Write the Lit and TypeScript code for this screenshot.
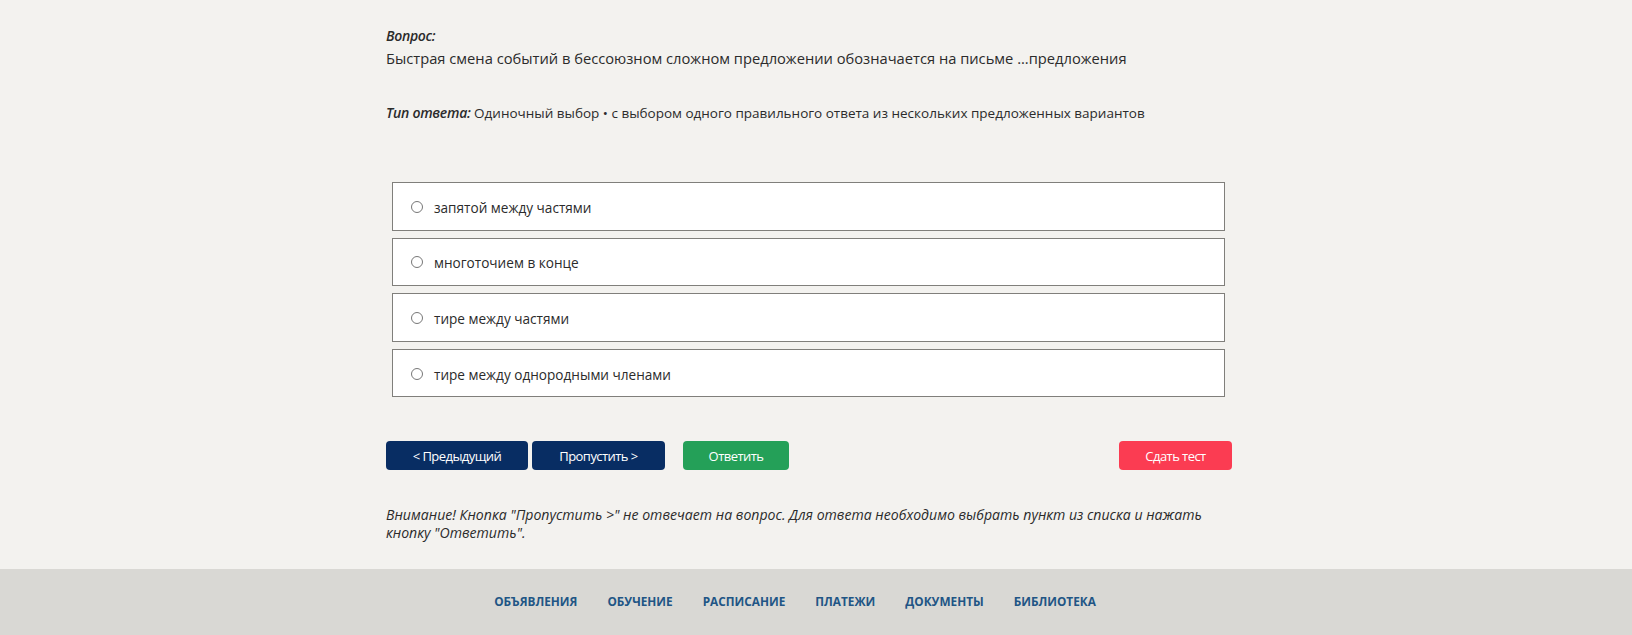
import { LitElement, html, css } from "lit";
import { customElement } from "lit/decorators.js";

const OPTIONS = ["запятой между частями", "многоточием в конце", "тире между частями", "тире между однородными членами"];
const LINKS = ["ОБЪЯВЛЕНИЯ", "ОБУЧЕНИЕ", "РАСПИСАНИЕ", "ПЛАТЕЖИ", "ДОКУМЕНТЫ", "БИБЛИОТЕКА"];

@customElement("app-root")
export class AppRoot extends LitElement {
  static styles = css`
    :host { display: block; background: #f3f2ef; color: #2b2b2b; font-family: "Open Sans", "Noto Sans", sans-serif; height: 635px; overflow: hidden; }
    .main { width: 846px; margin-left: 386px; padding-top: 26px; height: 569px; box-sizing: border-box; }
    .label { font-style: italic; font-weight: 600; font-size: 14px; line-height: 20px; letter-spacing: -0.3px; }
    .q { font-size: 14.7px; line-height: 24px; height: 24px; white-space: nowrap; }
    .type { margin-top: 33px; font-size: 13.5px; line-height: 20px; white-space: nowrap; }
    .type b { font-size: 14px; font-style: italic; font-weight: 600; letter-spacing: -0.25px; }
    .options { margin: 59px 0 0 6px; width: 833px; display: flex; flex-direction: column; gap: 7px; }
    .opt { box-sizing: border-box; height: 48.6px; background: #fff; border: 1px solid #807f7b; display: flex; align-items: center; padding: 2px 0 0 18px; font-size: 13.6px; }
    .radio { box-sizing: border-box; width: 12px; height: 12px; border-radius: 50%; border: 1px solid #777; margin: -1px 11px 0 0; background: #fff; flex: none; }
    .btns { margin-top: 44px; display: flex; align-items: stretch; height: 29px; }
    .btn { box-sizing: border-box; border-radius: 4px; color: #fff; font-size: 13px; display: flex; align-items: center; justify-content: center; letter-spacing: -0.55px; }
    .navy { background: #082d63; }
    .prev { width: 142px; margin-right: 4px; }
    .skip { width: 133px; margin-right: 18px; }
    .green { background: #24a058; width: 106px; margin-right: auto; }
    .red { background: #fb3c52; width: 113px; }
    .note { margin-top: 36px; font-style: italic; font-size: 14.1px; line-height: 18px; width: 846px; }
    footer { height: 66px; box-sizing: border-box; padding: 0 42px 2px 0; background: #d9d8d4; display: flex; justify-content: center; align-items: center; gap: 30px; font-family: "Open Sans", sans-serif; font-weight: 700; font-size: 11.8px; color: #215585; }
  `;

  render() {
    return html`
      <div class="main">
        <div class="label">Вопрос:</div>
        <div class="q">Быстрая смена событий в бессоюзном сложном предложении обозначается на письме ...предложения</div>
        <div class="type"><b>Тип ответа:</b> Одиночный выбор • с выбором одного правильного ответа из нескольких предложенных вариантов</div>
        <div class="options">
          ${OPTIONS.map((o) => html`<div class="opt"><span class="radio"></span>${o}</div>`)}
        </div>
        <div class="btns">
          <div class="btn navy prev">&lt; Предыдущий</div>
          <div class="btn navy skip">Пропустить &gt;</div>
          <div class="btn green">Ответить</div>
          <div class="btn red">Сдать тест</div>
        </div>
        <div class="note">Внимание! Кнопка "Пропустить &gt;" не отвечает на вопрос. Для ответа необходимо выбрать пункт из списка и нажать кнопку "Ответить".</div>
      </div>
      <footer>${LINKS.map((l) => html`<span>${l}</span>`)}</footer>
    `;
  }
}
